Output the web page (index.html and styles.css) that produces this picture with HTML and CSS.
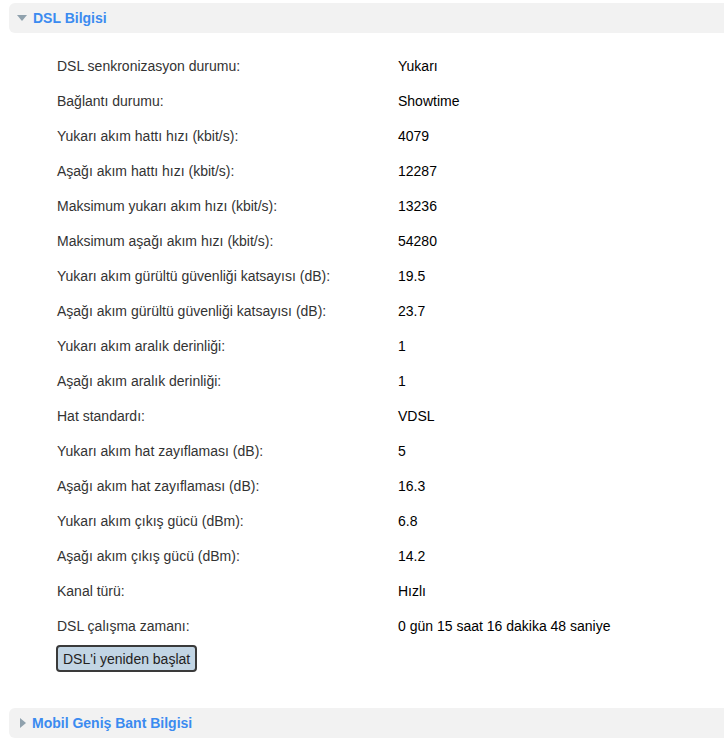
FILE: index.html
```html
<!DOCTYPE html>
<html>
<head>
    <title>DSL Bilgisi</title>
    <link rel="stylesheet" href="styles.css">
</head>
<body>
    <div class="panel">
        <div class="panel-head">
            <span class="arrow arrow-down"></span>
            <span class="panel-title">DSL Bilgisi</span>
        </div>
        <div class="panel-body">
            <table class="info-table">
                <tr><td>DSL senkronizasyon durumu:</td><td>Yukarı</td></tr>
                <tr><td>Bağlantı durumu:</td><td>Showtime</td></tr>
                <tr><td>Yukarı akım hattı hızı (kbit/s):</td><td>4079</td></tr>
                <tr><td>Aşağı akım hattı hızı (kbit/s):</td><td>12287</td></tr>
                <tr><td>Maksimum yukarı akım hızı (kbit/s):</td><td>13236</td></tr>
                <tr><td>Maksimum aşağı akım hızı (kbit/s):</td><td>54280</td></tr>
                <tr><td>Yukarı akım gürültü güvenliği katsayısı (dB):</td><td>19.5</td></tr>
                <tr><td>Aşağı akım gürültü güvenliği katsayısı (dB):</td><td>23.7</td></tr>
                <tr><td>Yukarı akım aralık derinliği:</td><td>1</td></tr>
                <tr><td>Aşağı akım aralık derinliği:</td><td>1</td></tr>
                <tr><td>Hat standardı:</td><td>VDSL</td></tr>
                <tr><td>Yukarı akım hat zayıflaması (dB):</td><td>5</td></tr>
                <tr><td>Aşağı akım hat zayıflaması (dB):</td><td>16.3</td></tr>
                <tr><td>Yukarı akım çıkış gücü (dBm):</td><td>6.8</td></tr>
                <tr><td>Aşağı akım çıkış gücü (dBm):</td><td>14.2</td></tr>
                <tr><td>Kanal türü:</td><td>Hızlı</td></tr>
                <tr><td>DSL çalışma zamanı:</td><td>0 gün 15 saat 16 dakika 48 saniye</td></tr>
            </table>
            <button class="btn">DSL'i yeniden başlat</button>
        </div>
    </div>

    <div class="panel">
        <div class="panel-head">
            <span class="arrow arrow-right"></span>
            <span class="panel-title">Mobil Geniş Bant Bilgisi</span>
        </div>
    </div>
</body>
</html>
```

FILE: styles.css
```css
html, body {
    margin: 0;
    padding: 0;
    overflow: hidden;
    background: #fff;
    font-family: "Liberation Sans", Arial, sans-serif;
    font-size: 14px;
}
.panel {
    margin-left: 9px;
    margin-right: -20px;
}
.panel + .panel {
    margin-top: 36px;
}
.panel:first-child {
    margin-top: 3px;
}
.panel-head {
    display: flex;
    align-items: center;
    height: 30px;
    background: #f2f2f2;
    border-radius: 6px;
}
.arrow {
    width: 0;
    height: 0;
    margin-left: 8px;
    margin-right: 6px;
}
.arrow-down {
    border-left: 5px solid transparent;
    border-right: 5px solid transparent;
    border-top: 6px solid #8fa1ad;
}
.arrow-right {
    margin-left: 11px;
    margin-right: 6px;
    border-top: 5px solid transparent;
    border-bottom: 5px solid transparent;
    border-left: 6px solid #8fa1ad;
}
.panel-title {
    color: #3b8bf0;
    font-weight: bold;
    font-size: 14px;
}
.panel-body {
    padding: 15px 0 0 47px;
}
.info-table {
    border-collapse: collapse;
}
.info-table td {
    height: 35px;
    padding: 0 0 0 1px;
    vertical-align: middle;
    color: #000;
}
.info-table td:first-child {
    width: 340px;
    color: #333;
}
.btn {
    margin-top: 2px;
    height: 27px;
    padding: 0 5px;
    font-family: "Liberation Sans", Arial, sans-serif;
    font-size: 14px;
    color: #222;
    background: #c2d5e4;
    border: 2px solid #3a3a3a;
    border-radius: 4px;
}
```
